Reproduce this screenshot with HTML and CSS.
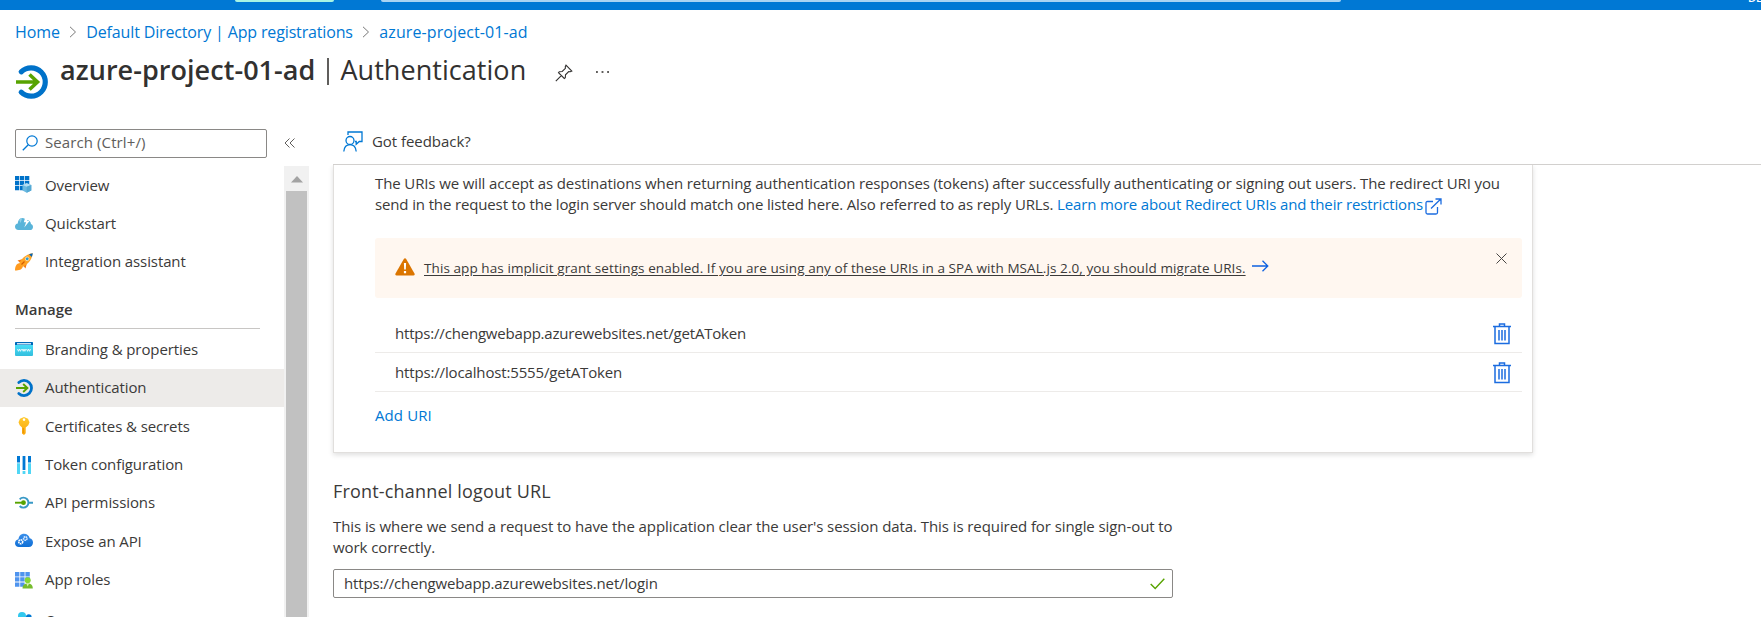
FILE: index.html
```html
<!DOCTYPE html>
<html lang="en">
<head>
<meta charset="utf-8">
<title>azure-project-01-ad | Authentication</title>
<link rel="stylesheet" href="styles.css">
</head>
<body>
<svg class="defs" width="0" height="0">
  <defs>
    <linearGradient id="g-cyan" x1="0" y1="0" x2="0" y2="1"><stop offset="0" stop-color="#50e6ff"/><stop offset="1" stop-color="#32bedd"/></linearGradient>
    <linearGradient id="g-cloud" x1="0" y1="0" x2="0" y2="1"><stop offset="0" stop-color="#3b8fea"/><stop offset="1" stop-color="#0f6fd6"/></linearGradient>
    <linearGradient id="g-key" x1="0" y1="0" x2="0" y2="1"><stop offset="0" stop-color="#ffca2c"/><stop offset="1" stop-color="#fba60a"/></linearGradient>
    <symbol id="auth" viewBox="0 0 32 34">
      <path d="M5.2 6.8A14.2 14.2 0 1 1 5.2 27.2" fill="none" stroke="#0072c9" stroke-width="5.2" stroke-linecap="round"/>
      <path d="M0 17H20M13.5 9.5L21.5 17L13.5 24.5" fill="none" stroke="#57a300" stroke-width="3.6"/>
    </symbol>
    <symbol id="trash" viewBox="0 0 18 22">
      <path d="M0 3.5H18M6.5 3V1H11.500V3M2 3.500V20.500H16V3.500M6 7V17.500M9 7V17.500M12 7V17.500" fill="none" stroke="#1b6ce0" stroke-width="1.500"/>
    </symbol>
    <symbol id="chev" viewBox="0 0 8 12"><path d="M1 .8L6.500 6L1 11.200" fill="none" stroke="#777" stroke-width="1"/></symbol>
  </defs>
</svg>
<div class="topbar">
  <div class="preview-pill"></div>
  <div class="top-search"></div>
  <div class="tenant">DEFAULT</div>
</div>
<nav class="crumbs">
  <a class="c-home">Home</a><svg class="chev"><use href="#chev"/></svg>
  <a class="c-dir">Default Directory | App registrations</a><svg class="chev"><use href="#chev"/></svg>
  <a class="c-app">azure-project-01-ad</a>
</nav>
<header class="title">
  <svg class="title-icon"><use href="#auth"/></svg>
  <h1><b>azure-project-01-ad</b><i></i><span>Authentication</span></h1>
  <svg class="pin" viewBox="0 0 18 18"><path d="M11 1.200L16.800 7L15.300 7.700L13.700 7.600L10.500 10.800L10.300 13.700L9.300 14.500L3.500 8.700L4.300 7.700L7.200 7.500L10.400 4.300L10.300 2.700ZM6.300 11.600L.8 17.200" fill="none" stroke="#323130" stroke-width="1.100"/></svg>
  <svg class="dots" viewBox="0 0 14 2"><path d="M0 0h2v2h-2zM6 0h2v2h-2zM12 0h2v2h-2z" fill="#605e5c"/></svg>
</header>
<div class="body">
  <aside>
    <div class="search-row">
      <div class="search">
        <svg viewBox="0 0 16 16"><path d="M6.300 9.700L.8 15.300" stroke="#0078d4" stroke-width="1.300"/><circle cx="10" cy="6" r="5.200" fill="none" stroke="#0078d4" stroke-width="1.200"/></svg>
        <span>Search (Ctrl+/)</span>
      </div>
      <svg class="collapse" viewBox="0 0 12 10"><path d="M5.500 .5L1 5L5.500 9.500M10.500 .5L6 5L10.500 9.500" fill="none" stroke="#605e5c"/></svg>
    </div>
    <div class="side">
      <div class="menu">
        <a class="item"><svg viewBox="0 0 18 18"><path d="M0 0h4.300v4.300H0zM5 0h4.300v4.300H5zM10 0h4.300v4.300H10zM0 5h4.300v4.300H0zM5 5h4.300v4.300H5zM10 5h4.300v4.300H10zM0 10h4.300v4.300H0zM5 10h4.300v4.300H5z" fill="#0072c9"/><path d="M7.500 9l4-2 4.800 2v5.500l-4.600 2.200-4.200-2.200z" fill="#6bb9e0"/><path d="M7.500 9l4.200 1.800L16.300 9l-4.600-1.800z" fill="#b5def3"/><path d="M11.700 10.800L16.300 9v5.500l-4.600 2.200z" fill="#54a9d4"/></svg><span>Overview</span></a>
        <a class="item"><svg viewBox="0 0 18 18"><path d="M3.500 15C1.300 15 0 13.600 0 11.700S1.200 8.600 2.800 8.400C3 5.200 5 3 7.300 3c2 0 3.300 1 3.900 2.500 2.500-.6 4.600 1 4.800 3.500 1.200.4 2 1.500 2 2.900 0 1.900-1.300 3.100-3 3.100z" fill="#59b4d9"/><path d="M4.200 5C5 3.700 6 3 7.300 3L5.500 8z" fill="#8fcfe8"/><path d="M10.500 1.500L8.800 7.200h2.300L9.300 12.500L14.500 6H12l1.800-4.500z" fill="#fff"/></svg><span>Quickstart</span></a>
        <a class="item"><svg viewBox="0 0 18 18"><path d="M2.500 7.500L8 6L5.500 10zM10.500 15.500L12 10L8 12.500z" fill="#f27c1c"/><path d="M0 17.500C0 14 1 10.500 4.300 10.200L7.800 13.700C7 16.500 4 17.500 0 17.500z" fill="#ff9a1f"/><path d="M4 11C6 6 11 1 17.700.3C17.200 7 12 12 7 14z" fill="#ffa322"/><path d="M14 1.200L17.800.2L16.900 4z" fill="#0065b8"/><circle cx="12.200" cy="5.800" r="1.900" fill="#2b9fd8" stroke="#ffd9a0"/><path d="M6.500 11.500l3-3" stroke="#d65c00" stroke-width="1.200"/></svg><span>Integration assistant</span></a>
        <h2>Manage</h2>
        <a class="item"><svg viewBox="0 0 18 18"><rect y="2" width="18" height="14" rx="1" fill="url(#g-cyan)"/><path d="M0 5V3q0-1 1-1h16q1 0 1 1v2z" fill="#0067b8"/><path d="M2 3h14v1.500H2z" fill="#c9e4f5"/><path d="M2.500 9l1 2.300 1-2.300 1 2.300 1-2.300M7.200 9l1 2.300L9 9l.9 2.300 1-2.300M11.600 9l1 2.300 1-2.300 1 2.300 1-2.300" fill="none" stroke="#fff" stroke-width=".8"/></svg><span>Branding &amp; properties</span></a>
        <a class="item active"><svg class="auth-sm"><use href="#auth"/></svg><span>Authentication</span></a>
        <a class="item"><svg viewBox="0 0 18 18"><path fill-rule="evenodd" d="M9 0l4 1.800 1.500 3.500-1.200 3L10.700 10.500v5.700L9 18l-2-1.500V10.500L4.700 8.300l-1.200-3L5 1.800zM9 1.300a1.300 1.300 0 1 0 .01 0z" fill="url(#g-key)"/><path d="M8.300 11v5" stroke="#e58a00" stroke-width=".8"/></svg><span>Certificates &amp; secrets</span></a>
        <a class="item"><svg viewBox="0 0 18 18"><path d="M2 0h3v6.500H2zM7.600 0h2.800v14H7.600zM13 0h3v6.500h-3z" fill="#0078d4"/><path d="M2 7.300h3V18H2zM7.600 15h2.800v3H7.600zM13 7.300h3V18h-3z" fill="#50d6f5"/></svg><span>Token configuration</span></a>
        <a class="item"><svg viewBox="0 0 18 18"><path d="M4.700 5.300A5 5 0 1 1 4.700 12M13.500 8.700H18" fill="none" stroke="#3999c6" stroke-width="1.900"/><path d="M0 8.700h8" stroke="#57a300" stroke-width="1.900"/><circle cx="8.500" cy="8.700" r="2.400" fill="#57a300"/></svg><span>API permissions</span></a>
        <a class="item"><svg viewBox="0 0 18 18"><path d="M4 15c-2.400 0-4-1.500-4-3.800C0 9 1.500 7.500 3.500 7.200 3.800 4 6 1.800 9 1.800c2.900 0 5 1.700 5.700 4.400C16.800 6.600 18 8.400 18 10.500c0 2.600-1.700 4.500-4.200 4.500z" fill="url(#g-cloud)"/><circle cx="5.700" cy="9.800" r="2" fill="none" stroke="#fff" stroke-width="1.600" stroke-dasharray="1.600 .5"/><circle cx="10.300" cy="6.500" r="1.700" fill="none" stroke="#dcecff" stroke-width="1.600" stroke-dasharray="1.400 .5"/></svg><span>Expose an API</span></a>
        <a class="item"><svg viewBox="0 0 18 18"><path d="M0 1h4.400v4.400H0zM5.200 1h4.400v4.400H5.200zM10.400 1h4.400v4.400h-4.400zM0 6.200h4.400v4.400H0zM5.200 6.200h4.400v4.400H5.200zM0 11.400h4.400v4.400H0zM5.200 11.400h4.400v4.400H5.200z" fill="#4f94ee"/><path d="M10.400 6.200h4.400v3h-4.400z" fill="#4f94ee"/><path d="M7.500 17.500c.2-3.500 1.700-5 5.200-5s5 1.500 5.100 5z" fill="#76bc2d"/><circle cx="12.700" cy="9.300" r="3" fill="#86d633"/><path d="M11.300 12.500h2.800l-1.400 3z" fill="#d8f3b5"/></svg><span>App roles</span></a>
        <a class="item last"><svg viewBox="0 0 18 18"><circle cx="7" cy="5" r="4" fill="#32c8ee"/><circle cx="13.800" cy="6" r="2.800" fill="#0078d4"/><path d="M0 18c0-5 3-8 7-8s7 3 7 8z" fill="#32c8ee"/></svg><span>Owners</span></a>
      </div>
      <div class="scroll"><svg viewBox="0 0 12 7"><path d="M0 6.500L6 0l6 6.500z" fill="#a3a3a3"/></svg><div class="thumb"></div></div>
    </div>
  </aside>
  <main>
    <div class="command">
      <svg viewBox="0 0 20 21"><path d="M5 4V1H19V10.500H16.300L13.200 13.300V10.500H12" fill="none" stroke="#0078d4" stroke-width="1.300"/><circle cx="7" cy="9.500" r="4" fill="none" stroke="#0078d4" stroke-width="1.300"/><path d="M.8 20.500C1.200 16.500 3.500 13.700 7 13.700S12.800 16.500 13.200 20.500" fill="none" stroke="#0078d4" stroke-width="1.300"/></svg>
      <span>Got feedback?</span>
    </div>
    <div class="content">
      <section class="card">
        <p class="intro"><span class="l1">The URIs we will accept as destinations when returning authentication responses (tokens) after successfully authenticating or signing out users. The redirect URI you</span><br><span class="l2">send in the request to the login server should match one listed here. Also referred to as reply URLs. </span><a class="l2">Learn more about Redirect URIs and their restrictions</a><svg class="ext" viewBox="0 0 17 17"><path d="M8 3.500H2.500Q1 3.500 1 5V14.500Q1 16 2.500 16H11Q12.500 16 12.500 14.500V9M6 10.500L15.500 1.200M10.500 1H16V6.500" fill="none" stroke="#1b6ce0" stroke-width="1.300"/></svg></p>
        <div class="warn">
          <svg class="tri" viewBox="0 0 20 18"><path d="M8.800 1Q10 -.6 11.200 1L19.600 15.800Q20.200 17.500 18.500 17.500H1.500Q-.2 17.500.4 15.800Z" fill="#db7500"/><path d="M8.900 5h2.200l-.3 6.500H9.200zM8.900 13h2.200v2.200H8.900z" fill="#fff"/></svg>
          <span class="warn-text">This app has implicit grant settings enabled. If you are using any of these URIs in a SPA with MSAL.js 2.0, you should migrate URIs.</span>
          <svg class="arrow" viewBox="0 0 17 12"><path d="M0 6H15.500M10.500 .8L15.800 6L10.500 11.200" fill="none" stroke="#0f62e0" stroke-width="1.300"/></svg>
          <svg class="close" viewBox="0 0 11 11"><path d="M.5 .5L10.500 10.500M10.500 .5L.5 10.500" stroke="#484644" stroke-width="1"/></svg>
        </div>
        <div class="uri"><span class="u1">https://chengwebapp.azurewebsites.net/getAToken</span><svg><use href="#trash"/></svg></div>
        <div class="uri"><span class="u2">https://localhost:5555/getAToken</span><svg><use href="#trash"/></svg></div>
        <a class="add">Add URI</a>
      </section>
      <h3>Front-channel logout URL</h3>
      <p class="desc">This is where we send a request to have the application clear the user's session data. This is required for single sign-out to<br>work correctly.</p>
      <div class="field"><span>https://chengwebapp.azurewebsites.net/login</span><svg viewBox="0 0 15 12"><path d="M.7 6L5.200 10.500L14.300 .8" fill="none" stroke="#57a300" stroke-width="1.400"/></svg></div>
    </div>
  </main>
</div>
</body>
</html>
```
FILE: styles.css
```css
* { box-sizing: border-box; }
html, body { height: 617px; overflow: hidden; }
body {
  margin: 0;
  background: #fff;
  color: #3b3a39;
  font: 15px/21px "Open Sans", "Noto Sans", sans-serif;
  display: flex;
  flex-direction: column;
}
svg { flex: none; overflow: visible; }
.defs { position: absolute; }
a { color: #0078d4; text-decoration: none; }
span, a, h1, h2, h3 { white-space: nowrap; }

.topbar { height: 10px; flex: none; background: #0078d4; display: flex; align-items: flex-start; padding-left: 235px; overflow: hidden; }
.topbar > div { flex: none; }
.preview-pill { width: 99px; height: 2px; background: #a8f5e4; border-radius: 0 0 2px 2px; }
.top-search { width: 960px; height: 2px; margin-left: 47px; background: #a9d3f2; border-radius: 0 0 2px 2px; }
.tenant { margin: -10px 0 0 407px; font-size: 11px; line-height: 15px; font-weight: 600; color: #fff; }

.crumbs { height: 44px; flex: none; display: flex; align-items: center; padding-left: 15px; font-size: 16px; }
.c-home { letter-spacing: -.1px; }
.c-dir { letter-spacing: -.15px; }
.c-app { letter-spacing: .1px; }
.chev { width: 8px; height: 12px; margin: 0 9px 0 9.500px; }

.title { height: 74px; flex: none; display: flex; align-items: flex-start; padding-left: 16px; }
.title-icon { width: 32px; height: 34px; margin-top: 11px; }
h1 { margin: -3px 0 0 12px; font-size: 27px; line-height: 38px; font-weight: 400; display: flex; align-items: center; color: #323130; letter-spacing: .05px; }
h1 b { font-weight: 600; }
h1 i { width: 2px; height: 27px; margin: 3px 11px 0 12px; background: #605e5c; }
.pin { width: 18px; height: 18px; margin: 10px 0 0 29px; }
.dots { width: 13px; height: 2px; margin: 17px 0 0 23px; }

.body { flex: 1; min-height: 0; display: flex; }
aside { width: 309px; flex: none; display: flex; flex-direction: column; }
.search-row { height: 38px; flex: none; display: flex; align-items: center; padding: 0 13px 8px 15px; justify-content: space-between; }
.search { width: 252px; height: 29px; border: 1px solid #8a8886; border-radius: 2px; display: flex; align-items: center; padding: 0 0 2px 6px; color: #605e5c; letter-spacing: .1px; }
.search svg { width: 16px; height: 16px; margin: 2px 7px 0 0; }
.collapse { width: 12px; height: 10px; }
.side { flex: 1; min-height: 0; display: flex; overflow: hidden; }
.menu { width: 284px; }
.item { height: 38.4px; display: flex; align-items: center; padding-left: 15px; color: #3b3a39; letter-spacing: -.1px; }
.item svg { width: 18px; height: 18px; margin-right: 12px; }
.item .auth-sm { width: 17px; margin-left: 1px; }
.active { background: #edebe9; }
.last { padding-top: 4px; }
h2 { width: 245px; height: 36px; margin: 12px 0 1px 15px; padding-top: 6px; border-bottom: 1px solid #c8c6c4; font-size: 15px; line-height: 21px; font-weight: 600; }
.scroll { width: 25px; background: #f1f1f1; display: flex; flex-direction: column; align-items: center; }
.scroll svg { width: 12px; height: 7px; margin: 10px 0 8px; }
.thumb { width: 21px; flex: 1; background: #c1c1c1; }

main { flex: 1; min-width: 0; padding-left: 24px; display: flex; flex-direction: column; }
.command { height: 37px; flex: none; border-bottom: 1px solid #d2d0ce; display: flex; align-items: flex-start; padding: 3px 0 0 10px; letter-spacing: -.05px; }
.command svg { width: 20px; height: 21px; margin-right: 9px; }
.content { flex: 1; min-height: 0; margin-left: -10px; padding-left: 10px; overflow: hidden; }
.card { width: 1200px; height: 288px; border: 1px solid #e1dfdd; border-top: 0; box-shadow: 0 2px 5px rgba(0, 0, 0, .13); padding: 8px 10px 0 41px; }
.intro { margin: 0 0 23px; height: 42px; }
.l1 { letter-spacing: -.117px; }
.l2 { letter-spacing: -.137px; }
.ext { width: 17px; height: 17px; margin-left: 2px; vertical-align: -5px; }
.warn { height: 60px; border-radius: 3px; background: #fff7f0; display: flex; align-items: flex-start; padding: 20px 15px 0 20px; margin-bottom: 16px; }
.tri { width: 20px; height: 18px; margin-right: 9px; }
.warn-text { font-size: 13.5px; letter-spacing: .085px; text-decoration: underline; text-underline-offset: 2px; }
.arrow { width: 17px; height: 12px; margin: 2px 0 0 6px; }
.close { width: 11px; height: 11px; margin: -5px 0 0 auto; }
.uri { height: 39px; border-bottom: 1px solid #edebe9; display: flex; align-items: center; justify-content: space-between; padding: 1px 11px 0 20px; }
.uri svg { width: 18px; height: 22px; }
.u1 { letter-spacing: -.19px; }
.u2 { letter-spacing: -.15px; }
.add { display: block; margin-top: 13px; letter-spacing: .1px; }
h3 { margin: 25px 0 0; font-size: 18px; line-height: 26px; font-weight: 400; letter-spacing: .18px; }
.desc { margin: 12px 0 11px; letter-spacing: -.08px; }
.field { width: 840px; height: 29px; border: 1px solid #8a8886; border-radius: 2px; display: flex; align-items: center; justify-content: space-between; padding: 0 7px 0 10px; letter-spacing: -.14px; }
.field svg { width: 15px; height: 12px; }
```
